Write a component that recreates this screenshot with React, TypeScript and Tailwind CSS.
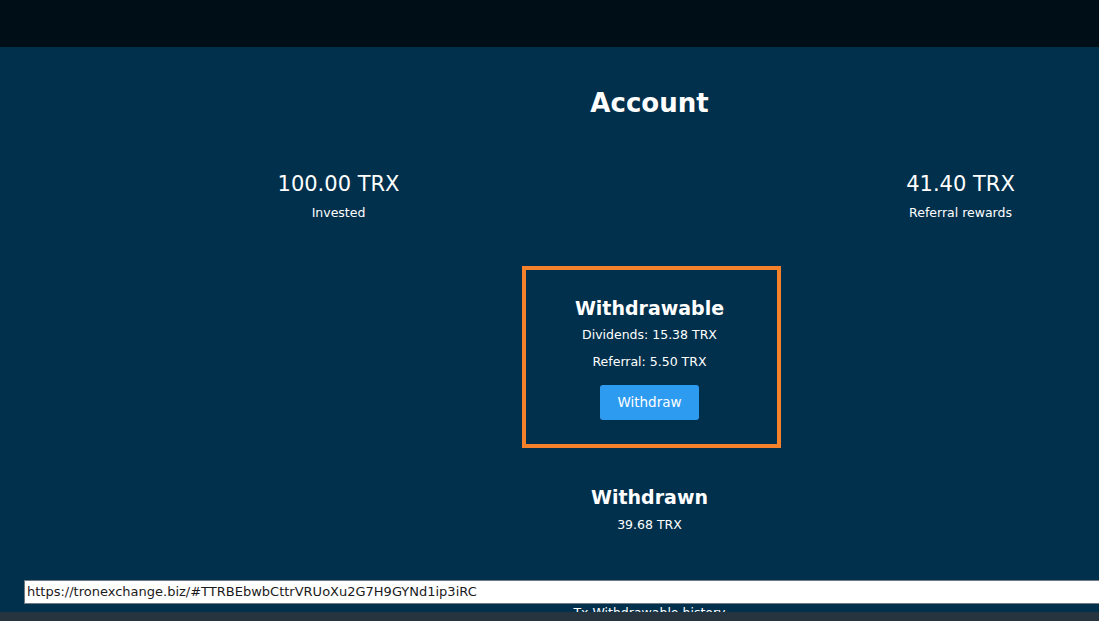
import React from 'react';

const font = { fontFamily: '"DejaVu Sans", "Open Sans", sans-serif' };

export default function App() {
  const stats = [
    { value: '100.00 TRX', label: 'Invested' },
    { value: '', label: '' },
    { value: '41.40 TRX', label: 'Referral rewards' },
  ];

  return (
    <div className="relative w-[1099px] h-[621px] overflow-hidden bg-[#01304c] text-white" style={font}>
      {/* top bar */}
      <div className="h-[47px] bg-[#000e18]" />

      <div className="pl-[183px] w-[1116px]">
        <h2 className="mt-[40px] text-center text-[26px] font-bold leading-[32px]">Account</h2>

        <div className="grid grid-cols-3 mt-[51px]">
          {stats.map((s, i) => (
            <div key={i} className="flex flex-col items-center">
              <div className="text-[21px] leading-[28px]">{s.value}</div>
              <div className="mt-[5px] text-[12.5px] leading-[20px]">{s.label}</div>
            </div>
          ))}
        </div>

        <div className="flex flex-col items-center mt-[43px]">
          <div className="ml-[4px] w-[259px] h-[182px] border-4 border-[#f5822a] flex flex-col items-center pt-[25px] pr-[4px]">
            <h3 className="text-[19px] font-bold leading-[26px]">Withdrawable</h3>
            <div className="mt-[4px] text-[12.5px] leading-[20px]">Dividends: 15.38 TRX</div>
            <div className="mt-[7px] text-[12.5px] leading-[20px]">Referral: 5.50 TRX</div>
            <button className="mt-[13px] w-[99px] h-[35px] rounded-[3px] bg-[#2d9bf0] text-[13.5px] text-white">
              Withdraw
            </button>
          </div>

          <h3 className="mt-[36px] text-[19px] font-bold leading-[26px]">Withdrawn</h3>
          <div className="mt-[5px] text-[12.5px] leading-[20px]">39.68 TRX</div>

          <div className="mt-[68px] text-[12.5px] leading-[20px]">Tx Withdrawable history</div>
        </div>
      </div>

      {/* link preview bar */}
      <div className="absolute left-[24px] top-[580px] w-[1080px] h-[24px] bg-white border border-[#6f7a82] flex items-center pl-[2px]">
        <span className="text-[13px] text-[#1b1b1b]">
          https://tronexchange.biz/#TTRBEbwbCttrVRUoXu2G7H9GYNd1ip3iRC
        </span>
      </div>

      {/* bottom strip */}
      <div className="absolute left-0 bottom-0 w-full h-[9px] bg-[#25343e]" />
    </div>
  );
}
